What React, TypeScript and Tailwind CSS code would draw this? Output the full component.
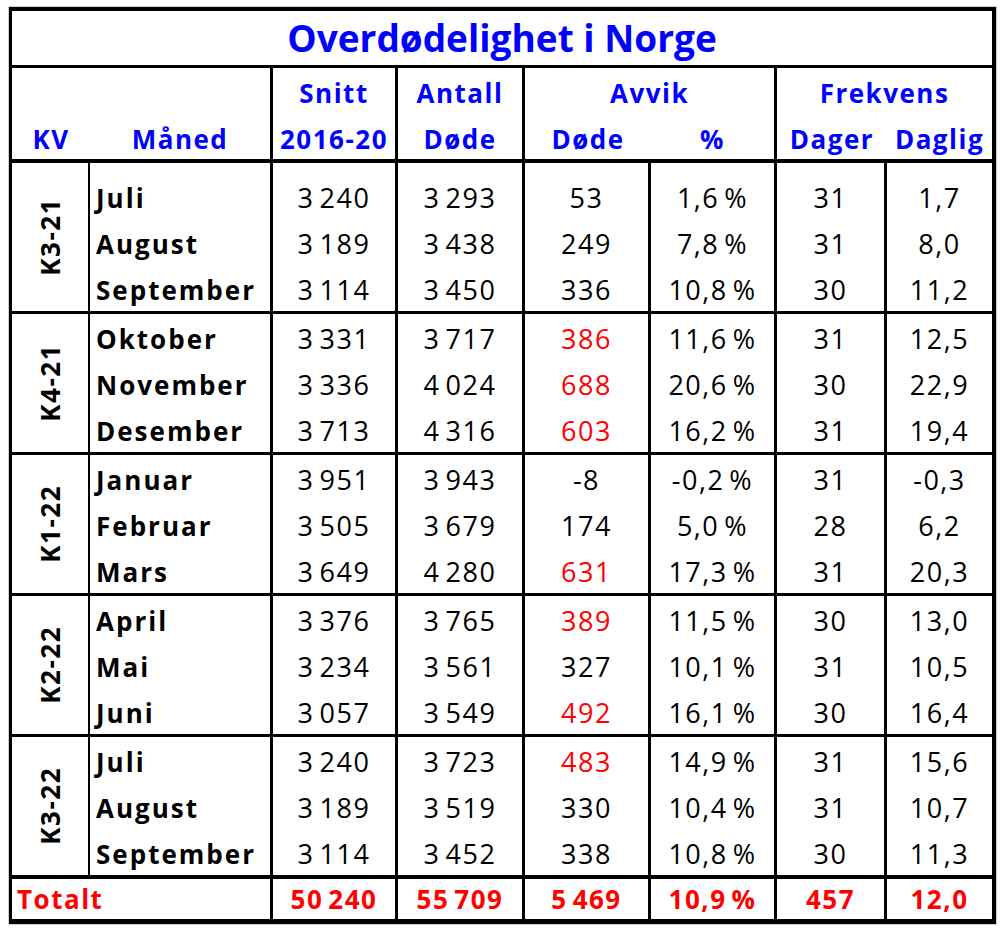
import type { ReactNode } from "react";

type Row = {
  m: string;
  snitt: string;
  antall: string;
  avvik: string;
  red?: boolean;
  pct: string;
  dager: string;
  daglig: string;
};

type Group = { kv: string; rows: Row[] };

const groups: Group[] = [
  {
    kv: "K3-21",
    rows: [
      { m: "Juli", snitt: "3 240", antall: "3 293", avvik: "53", pct: "1,6 %", dager: "31", daglig: "1,7" },
      { m: "August", snitt: "3 189", antall: "3 438", avvik: "249", pct: "7,8 %", dager: "31", daglig: "8,0" },
      { m: "September", snitt: "3 114", antall: "3 450", avvik: "336", pct: "10,8 %", dager: "30", daglig: "11,2" },
    ],
  },
  {
    kv: "K4-21",
    rows: [
      { m: "Oktober", snitt: "3 331", antall: "3 717", avvik: "386", red: true, pct: "11,6 %", dager: "31", daglig: "12,5" },
      { m: "November", snitt: "3 336", antall: "4 024", avvik: "688", red: true, pct: "20,6 %", dager: "30", daglig: "22,9" },
      { m: "Desember", snitt: "3 713", antall: "4 316", avvik: "603", red: true, pct: "16,2 %", dager: "31", daglig: "19,4" },
    ],
  },
  {
    kv: "K1-22",
    rows: [
      { m: "Januar", snitt: "3 951", antall: "3 943", avvik: "-8", pct: "-0,2 %", dager: "31", daglig: "-0,3" },
      { m: "Februar", snitt: "3 505", antall: "3 679", avvik: "174", pct: "5,0 %", dager: "28", daglig: "6,2" },
      { m: "Mars", snitt: "3 649", antall: "4 280", avvik: "631", red: true, pct: "17,3 %", dager: "31", daglig: "20,3" },
    ],
  },
  {
    kv: "K2-22",
    rows: [
      { m: "April", snitt: "3 376", antall: "3 765", avvik: "389", red: true, pct: "11,5 %", dager: "30", daglig: "13,0" },
      { m: "Mai", snitt: "3 234", antall: "3 561", avvik: "327", pct: "10,1 %", dager: "31", daglig: "10,5" },
      { m: "Juni", snitt: "3 057", antall: "3 549", avvik: "492", red: true, pct: "16,1 %", dager: "30", daglig: "16,4" },
    ],
  },
  {
    kv: "K3-22",
    rows: [
      { m: "Juli", snitt: "3 240", antall: "3 723", avvik: "483", red: true, pct: "14,9 %", dager: "31", daglig: "15,6" },
      { m: "August", snitt: "3 189", antall: "3 519", avvik: "330", pct: "10,4 %", dager: "31", daglig: "10,7" },
      { m: "September", snitt: "3 114", antall: "3 452", avvik: "338", pct: "10,8 %", dager: "30", daglig: "11,3" },
    ],
  },
];

// tall med smalt mellomrom (tusenskille / før %)
function Num({ v }: { v: string }) {
  const parts = v.split(" ");
  const out: ReactNode[] = [];
  parts.forEach((p, i) => {
    if (i > 0) out.push(<span key={"s" + i} className="inline-block w-[5px]" />);
    out.push(<span key={"p" + i}>{p}</span>);
  });
  return <span className="whitespace-nowrap">{out}</span>;
}

function DataRow({ r, first }: { r: Row; first?: boolean }) {
  const h = first ? "h-[56px] pt-[14px]" : "h-[46px] pt-[4px]";
  return (
    <div className="flex">
      <div className={`w-[183px] ${h} flex items-center pl-[6px] border-r-[3px] border-black font-bold text-[26px] tracking-[2px]`}>
        {r.m}
      </div>
      <div className={`w-[125px] ${h} flex items-center justify-center border-r-[3px] border-black`}>
        <Num v={r.snitt} />
      </div>
      <div className={`w-[127px] ${h} flex items-center justify-center border-r-[3px] border-black`}>
        <Num v={r.antall} />
      </div>
      <div className={`w-[126px] ${h} flex items-center justify-center border-r-[3px] border-black ${r.red ? "text-[#ff0000]" : ""}`}>
        {r.avvik}
      </div>
      <div className={`w-[126px] ${h} flex items-center justify-center border-r-[3px] border-black`}>
        <Num v={r.pct} />
      </div>
      <div className={`w-[110px] ${h} flex items-center justify-center border-r-[3px] border-black`}>{r.dager}</div>
      <div className={`w-[105px] ${h} flex items-center justify-center`}>{r.daglig}</div>
    </div>
  );
}

export default function App() {
  return (
    <div className="bg-white w-[1002px] h-[930px] font-['Open_Sans',sans-serif] text-black text-[27px] tracking-[1.5px]">
      <div className="h-[7px] overflow-hidden pl-[474px]">
        <div className="-mt-[45px] text-[36px] leading-none font-bold tracking-normal">g</div>
      </div>
      <div className="ml-[9px] w-[987px] border-l-[3px] border-t-4 border-r-4 border-b-[5px] border-black shadow-[0_0_0_1px_#cfcfcf]">
        {/* tittel */}
        <div className="h-[57px] flex items-center justify-center border-b-[3px] border-black text-[37px] font-bold text-[#0000ff] tracking-normal">
          Overdødelighet i Norge
        </div>

        {/* kolonneoverskrifter */}
        <div className="flex h-[95px] border-b-4 border-black font-bold text-[#0000ff] text-[26px] tracking-[1.5px]">
          <div className="w-[78px] flex flex-col">
            <div className="h-[47px]" />
            <div className="flex-1 flex items-center justify-center pt-[4px]">KV</div>
          </div>
          <div className="w-[183px] flex flex-col border-r-[3px] border-black">
            <div className="h-[47px]" />
            <div className="flex-1 flex items-center justify-center pt-[4px]">Måned</div>
          </div>
          <div className="w-[125px] flex flex-col border-r-[3px] border-black">
            <div className="h-[47px] flex items-center justify-center pt-[3px]">Snitt</div>
            <div className="flex-1 flex items-center justify-center pt-[4px]">2016-20</div>
          </div>
          <div className="w-[127px] flex flex-col border-r-[3px] border-black">
            <div className="h-[47px] flex items-center justify-center pt-[3px]">Antall</div>
            <div className="flex-1 flex items-center justify-center pt-[4px]">Døde</div>
          </div>
          <div className="w-[252px] flex flex-col border-r-[3px] border-black">
            <div className="h-[47px] flex items-center justify-center pt-[3px]">Avvik</div>
            <div className="flex-1 flex pt-[4px]">
              <div className="w-[126px] flex items-center justify-center">Døde</div>
              <div className="flex-1 flex items-center justify-center">%</div>
            </div>
          </div>
          <div className="flex-1 flex flex-col">
            <div className="h-[47px] flex items-center justify-center pt-[3px]">Frekvens</div>
            <div className="flex-1 flex pt-[4px]">
              <div className="w-[110px] flex items-center justify-center">Dager</div>
              <div className="flex-1 flex items-center justify-center">Daglig</div>
            </div>
          </div>
        </div>

        {/* kvartaler */}
        {groups.map((g, i) => (
          <div
            key={g.kv + i}
            className={`flex border-black ${i === groups.length - 1 ? "border-b-4" : "border-b-[3px]"}`}
          >
            <div className="w-[78px] flex items-center justify-center border-r-2 border-black">
              <span className="[writing-mode:vertical-rl] rotate-180 font-bold text-[26px]">{g.kv}</span>
            </div>
            <div className="flex flex-col">
              {g.rows.map((r, j) => (
                <DataRow key={g.kv + r.m} r={r} first={i === 0 && j === 0} />
              ))}
            </div>
          </div>
        ))}

        {/* totalt */}
        <div className="flex h-[40px] font-bold text-[#ff0000] text-[26px]">
          <div className="w-[261px] flex items-center pl-[5px] border-r-[3px] border-black">Totalt</div>
          <div className="w-[125px] flex items-center justify-center border-r-[3px] border-black">
            <Num v="50 240" />
          </div>
          <div className="w-[127px] flex items-center justify-center border-r-[3px] border-black">
            <Num v="55 709" />
          </div>
          <div className="w-[126px] flex items-center justify-center border-r-[3px] border-black">
            <Num v="5 469" />
          </div>
          <div className="w-[126px] flex items-center justify-center border-r-[3px] border-black">
            <Num v="10,9 %" />
          </div>
          <div className="w-[110px] flex items-center justify-center border-r-[3px] border-black">457</div>
          <div className="flex-1 flex items-center justify-center">12,0</div>
        </div>
      </div>
    </div>
  );
}
